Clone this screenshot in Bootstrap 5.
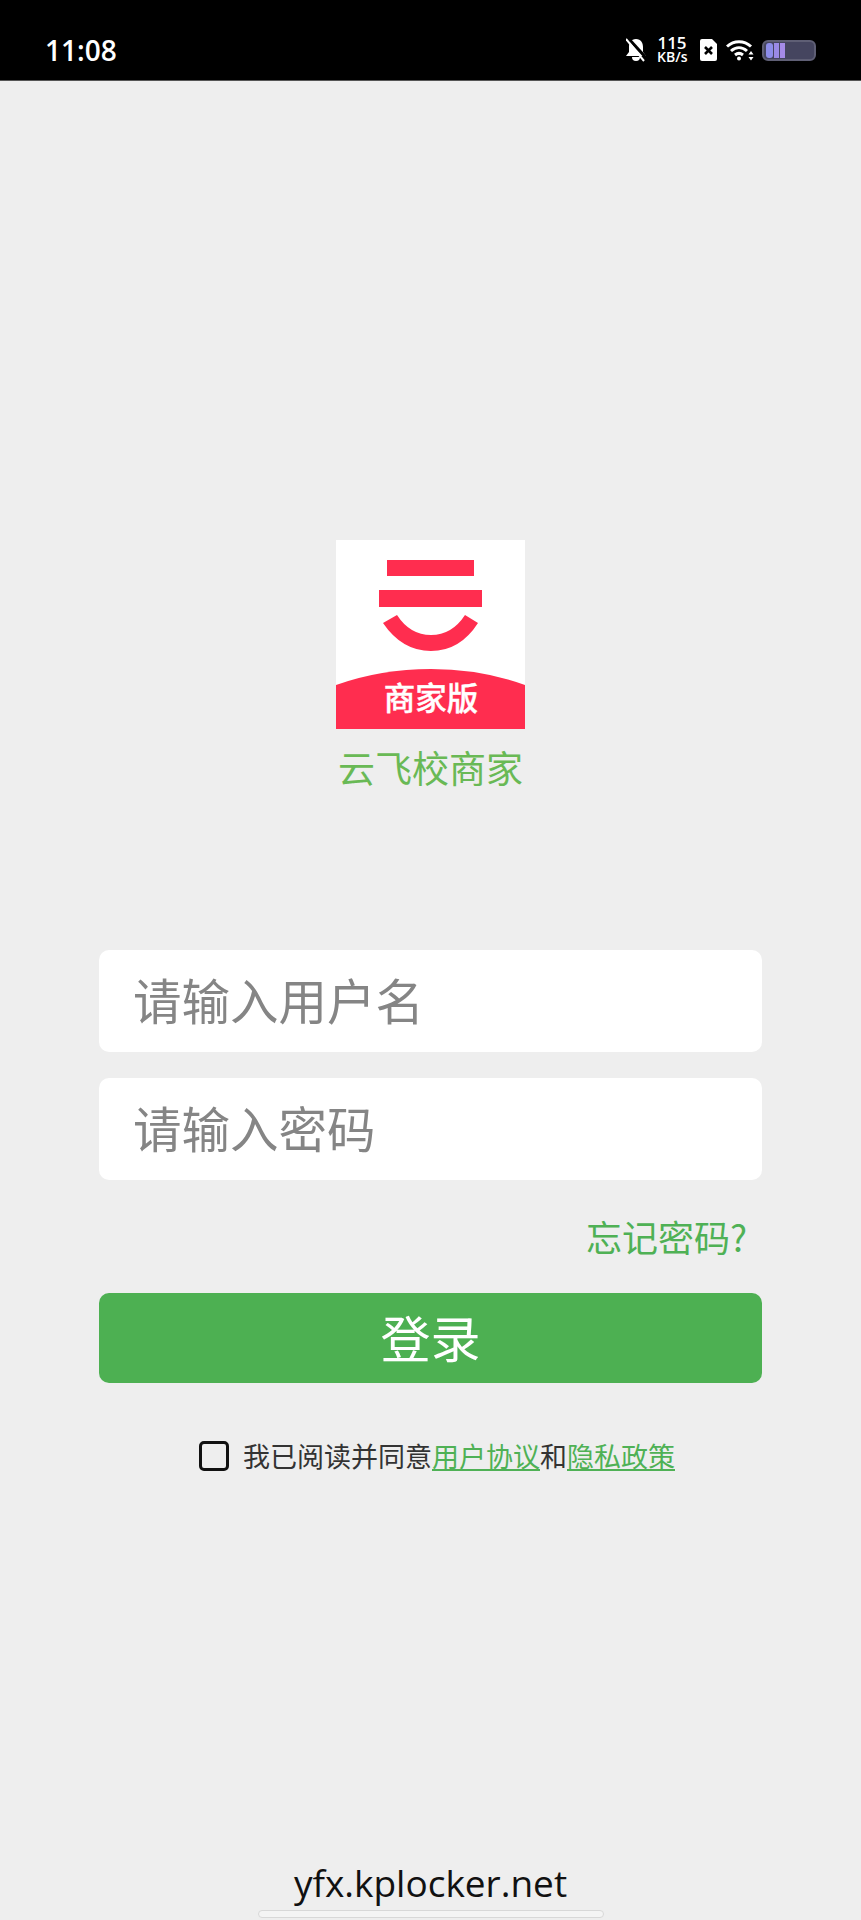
<!DOCTYPE html>
<html lang="zh-CN">
<head>
    <meta charset="UTF-8">
    <meta name="viewport" content="width=device-width, initial-scale=1.0">
    <title>云飞校商家</title>
    <link rel="stylesheet" href="https://cdn.jsdelivr.net/npm/bootstrap@5.3.0/dist/css/bootstrap.min.css">
    <style>
        body {
            background-color: #eeeeee;
            font-family: "Noto Sans CJK SC", "Noto Sans", sans-serif;
        }
        .phone-page {
            height: 1920px;
        }
        .status-bar {
            height: 81px;
            background-color: #000;
            border-bottom: 1px solid #555;
            padding: 20px 45px 0;
            color: #fff;
        }
        .status-time {
            font-family: "Open Sans", sans-serif;
            font-size: 28px;
            font-weight: 600;
        }
        .status-speed {
            font-family: "Open Sans", sans-serif;
            font-size: 14px;
            font-weight: 600;
            line-height: 14px;
            width: 30px;
            margin: 0 4px 0 3px;
        }
        .status-speed b {
            display: block;
            font-size: 17px;
            font-weight: 600;
        }
        .status-icons {
            gap: 8px;
        }
        .login-body {
            padding: 459px 99px 0;
        }
        .app-logo {
            width: 189px;
            height: 189px;
            display: block;
        }
        .app-name {
            font-size: 37px;
            line-height: 50px;
            color: #69b955;
            margin-top: 13px;
        }
        .login-input.form-control {
            height: 102px;
            border: 0;
            border-radius: 10px;
            font-size: 48.5px;
            padding: 0 35px 4px 34px;
            margin-bottom: 26px;
        }
        .login-input.form-control::placeholder {
            color: #858585;
        }
        .name-input {
            margin-top: 158px;
        }
        .forgot-row {
            margin-top: 5px;
        }
        .forgot-link {
            font-size: 36px;
            line-height: 50px;
            color: #4fb155;
            text-decoration: none;
            padding-right: 15px;
        }
        .login-btn.btn {
            height: 90px;
            margin-top: 32px;
            padding: 0 0 4px;
            border: 0;
            border-radius: 10px;
            background-color: #4db052;
            color: #fff;
            font-size: 50px;
            line-height: 1;
        }
        .agree-row {
            margin-top: 55px;
            padding-left: 13px;
            font-size: 27px;
            line-height: 36px;
            color: #333;
            gap: 14px;
        }
        .agree-row .form-check-input {
            width: 30px;
            height: 30px;
            margin: 0;
            background-color: transparent;
            border: 3px solid #111;
            border-radius: 5px;
        }
        .agree-row a {
            color: #4fb155;
        }
        .site-foot {
            font-family: "Open Sans", sans-serif;
            font-size: 37px;
            line-height: 50px;
            color: #111;
            margin-bottom: 2px;
        }
        .home-bar {
            width: 346px;
            height: 8px;
            margin: 0 auto 2px;
            background-color: #f4f4f4;
            border: 1px solid #d8d8d8;
            border-radius: 4px;
        }
    </style>
</head>
<body>

<div class="phone-page d-flex flex-column">
    <!-- Status bar -->
    <div class="status-bar d-flex align-items-center justify-content-between">
        <span class="status-time">11:08</span>
        <div class="status-icons d-flex align-items-center">
            <svg width="20" height="24" viewBox="0 0 20 24">
                <path d="M10 1c5 0 7 4 7 8v5l3 4H0l3-4V9c0-4 2-8 7-8z" fill="#fff"/>
                <path d="M6 19h8a4 4 0 0 1-8 0z" fill="#fff"/>
                <path d="M2 0l20 22" stroke="#000" stroke-width="3"/>
                <path d="M0 1l18 22" stroke="#fff" stroke-width="2"/>
            </svg>
            <div class="status-speed text-center"><b>115</b>KB/s</div>
            <svg width="19" height="24" viewBox="0 0 19 24">
                <path d="M3 1h10l5 5v15a2 2 0 0 1-2 2H3a2 2 0 0 1-2-2V3a2 2 0 0 1 2-2z" fill="#fff"/>
                <path d="M6 9l7 7M13 9l-7 7" stroke="#000" stroke-width="2.6"/>
            </svg>
            <svg width="28" height="22" viewBox="0 0 28 22" fill="none" stroke="#fff" stroke-width="3">
                <path d="M1 7.500c7-6.500 17-6.500 24 0"/>
                <path d="M5 12c5-4.500 11-4.500 16 0"/>
                <path d="M9 16c2.500-2 5.500-2 8 0"/>
                <circle cx="13" cy="19.500" r="2" fill="#fff" stroke="none"/>
                <path d="M25 12l2.500 3.500h-5zM25 21.500l2.500-3.500h-5z" fill="#fff" stroke="none"/>
            </svg>
            <svg width="54" height="21" viewBox="0 0 54 21">
                <rect x="1" y="1" width="52" height="19" rx="5" fill="#45455f" stroke="#5f5f75" stroke-width="2"/>
                <rect x="4" y="3" width="7" height="15" rx="3" fill="#8d8dea"/>
                <rect x="12" y="3" width="5" height="15" fill="#9a8ae6"/>
                <rect x="18" y="3" width="5" height="15" fill="#a58be8"/>
            </svg>
        </div>
    </div>

    <!-- Login form -->
    <div class="login-body d-flex flex-column flex-grow-1">
        <div class="d-flex flex-column align-items-center">
            <svg class="app-logo" viewBox="0 0 189 189">
                <rect width="189" height="189" fill="#fff"/>
                <rect x="51" y="20" width="87" height="16" fill="#ff2d4f"/>
                <rect x="43" y="50" width="103" height="17" fill="#ff2d4f"/>
                <path d="M47 83 L61 75 Q74 95 95 95 Q116 95 129 75 L142 83 Q124 111 95 111 Q66 111 47 83z" fill="#ff2d4f"/>
                <path d="M0 145 Q45 129 95 129 Q145 129 189 145 V189 H0z" fill="#ff2d4f"/>
                <text x="95" y="170" text-anchor="middle" fill="#fff" stroke="#fff" stroke-width="0.4" font-size="31.500" font-weight="500">商家版</text>
            </svg>
            <div class="app-name">云飞校商家</div>
        </div>

        <input type="text" class="form-control login-input name-input" placeholder="请输入用户名">
        <input type="password" class="form-control login-input" placeholder="请输入密码">

        <div class="forgot-row text-end"><a href="#" class="forgot-link">忘记密码?</a></div>

        <button type="button" class="btn login-btn w-100">登录</button>

        <div class="agree-row d-flex align-items-center justify-content-center">
            <input class="form-check-input" type="checkbox">
            <span>我已阅读并同意<a href="#">用户协议</a>和<a href="#">隐私政策</a></span>
        </div>

        <div class="site-foot text-center mt-auto">yfx.kplocker.net</div>
    </div>
    <div class="home-bar flex-shrink-0"></div>
</div>

<script src="https://cdn.jsdelivr.net/npm/bootstrap@5.3.0/dist/js/bootstrap.bundle.min.js"></script>
</body>
</html>
